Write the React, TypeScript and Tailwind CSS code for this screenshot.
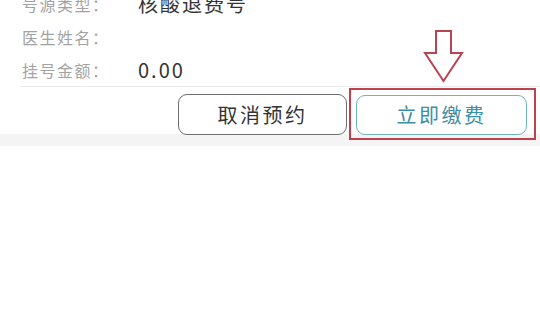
export default function App() {
  const rows = [
    { label: "号源类型：", value: "核酸退费号" },
    { label: "医生姓名：", value: "" },
    { label: "挂号金额：", value: "0.00" },
  ];

  return (
    <div
      className="relative w-[540px] h-[320px] overflow-hidden bg-white"
      style={{ fontFamily: '"Noto Sans CJK SC", "Noto Sans", sans-serif' }}
    >
      <div className="-mt-[13px]">
        {/* info rows */}
        <div className="ml-[20px] border-b border-[#ececec]">
          {rows.map((r) => (
            <div key={r.label} className="flex items-center h-[33px] pl-[2px]">
              <span className="w-[116px] text-[16px] tracking-[1.5px] text-[#a3a3a3]">{r.label}</span>
              <span className="text-[20px] tracking-[2px] text-[#333]">{r.value}</span>
            </div>
          ))}
        </div>

        {/* actions */}
        <div className="flex justify-end gap-[9px] pt-[7px] pr-[13px]">
          <button className="w-[169px] h-[41px] rounded-[9px] border-[1.5px] border-[#6e6e6e] bg-white text-[20px] tracking-[2.5px] text-[#333]">
            取消预约
          </button>
          <button className="w-[171px] h-[40px] mt-[1px] rounded-[9px] border-[1.5px] border-[#6fb3bf] bg-white text-[20px] tracking-[2.5px] text-[#3b8ea6]">
            立即缴费
          </button>
        </div>
      </div>

      <div className="h-[12px] -mt-[1px] bg-[#f4f4f4]" />

      {/* annotation: highlight box */}
      <div className="absolute left-[349px] top-[88px] w-[187px] h-[52px] border-2 border-[#c0414d]" />

      {/* annotation: arrow */}
      <svg className="absolute left-[422px] top-[28px]" width="44" height="58" viewBox="0 0 44 58">
        <path
          d="M14 3 H29 V25 H40 L21.5 53 L3 25 H14 Z"
          fill="white"
          stroke="#b9434f"
          strokeWidth="2"
          strokeLinejoin="miter"
        />
      </svg>
    </div>
  );
}
